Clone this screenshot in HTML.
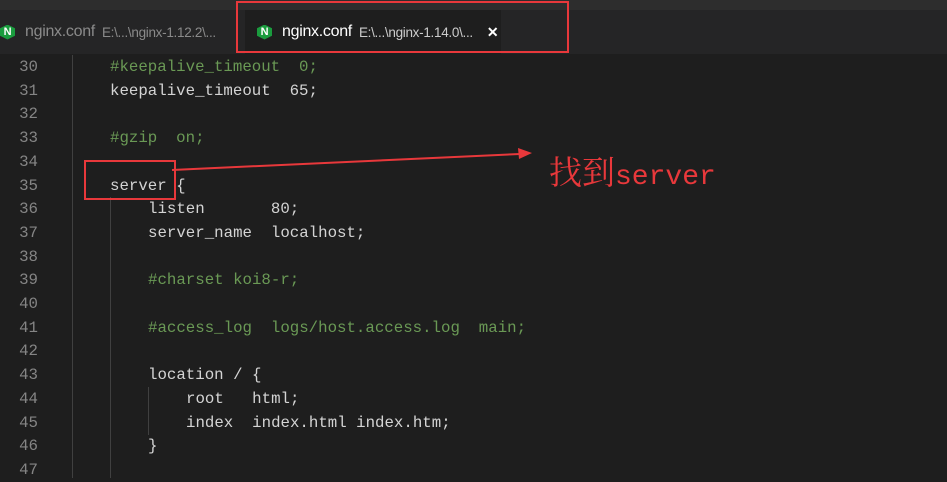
<!DOCTYPE html>
<html><head><meta charset="utf-8"><style>
body{margin:0;width:947px;height:478px;background:#1e1e1e;overflow:hidden;position:relative;font-family:"Liberation Sans",sans-serif}
.top{position:absolute;left:0;top:0;width:947px;height:10px;background:#2d2d2d}
.tabs{position:absolute;left:0;top:10px;width:947px;height:44px;background:#252526}
.tab{position:absolute;top:0;height:44px;display:flex;align-items:center;font-size:16px;letter-spacing:-0.3px}
.n{width:15px;height:15px;background:#1a9c3e;clip-path:polygon(50% 0,100% 25%,100% 75%,50% 100%,0 75%,0 25%);color:#fff;font-size:11px;font-weight:bold;text-align:center;line-height:15px;margin-right:10px}
.p{font-size:13.5px;margin-left:7px}
.code{position:absolute;left:0;top:55px;font-family:"Liberation Mono",monospace;font-size:15.75px;color:#d4d4d4}
.l{position:absolute;height:24px;line-height:24px;white-space:pre}
.num{position:absolute;width:38px;text-align:right;color:#858585;white-space:pre}
.c{color:#6a9955}
</style></head><body>
<div class="top"></div>
<div class="tabs">
<div class="tab" style="left:0;width:245px;color:#8a8a8a"><div class="n">N</div>nginx.conf<span class="p">E:\...\nginx-1.12.2\...</span></div>
<div class="tab" style="left:245px;width:256px;background:#1e1e1e;color:#fff"><div class="n" style="margin-left:12px">N</div>nginx.conf<span class="p" style="color:#ccc">E:\...\nginx-1.14.0\...</span><span style="margin-left:14px;font-weight:bold;font-size:14px">✕</span></div>
</div>
<div style="position:absolute;left:236px;top:1px;width:329px;height:48px;border:2px solid #e8383b"></div>
<div style="position:absolute;left:72px;top:55px;width:1px;height:423px;background:#404040"></div>
<div style="position:absolute;left:110px;top:197px;width:1px;height:281px;background:#404040"></div>
<div style="position:absolute;left:148px;top:387px;width:1px;height:48px;background:#404040"></div>
<div class="code" id="c"></div>
<script>
var L=[[0,'<span class="c">#keepalive_timeout  0;</span>'],[0,"keepalive_timeout  65;"],[0,""],[0,'<span class="c">#gzip  on;</span>'],[0,""],[0,"server {"],[1,"listen       80;"],[1,"server_name  localhost;"],[0,""],[1,'<span class="c">#charset koi8-r;</span>'],[0,""],[1,'<span class="c">#access_log  logs/host.access.log  main;</span>'],[0,""],[1,"location / {"],[2,"root   html;"],[2,"index  index.html index.htm;"],[1,"}"],[0,""]];
var h="";for(var i=0;i<L.length;i++){var y=i*23.7;h+='<div class="num" style="top:'+y+'px;line-height:24px">'+(30+i)+'</div><div class="l" style="left:'+(110+L[i][0]*38)+'px;top:'+y+'px">'+L[i][1]+'</div>';}
document.getElementById("c").innerHTML=h;
</script>
<div style="position:absolute;left:84px;top:160px;width:88px;height:36px;border:2px solid #e8383b"></div>
<svg style="position:absolute;left:0;top:0" width="947" height="478"><line x1="172" y1="170" x2="520" y2="154" stroke="#e8383b" stroke-width="2"/><polygon points="532,153 518,148 519,159" fill="#e8383b"/></svg>
<div style="position:absolute;left:549px;top:147px;color:#e8383b;font-size:33px;font-family:'Noto Serif CJK SC',serif;white-space:nowrap">找到<span style="font-family:'Liberation Mono',monospace;font-size:28px">server</span></div>
</body></html>
